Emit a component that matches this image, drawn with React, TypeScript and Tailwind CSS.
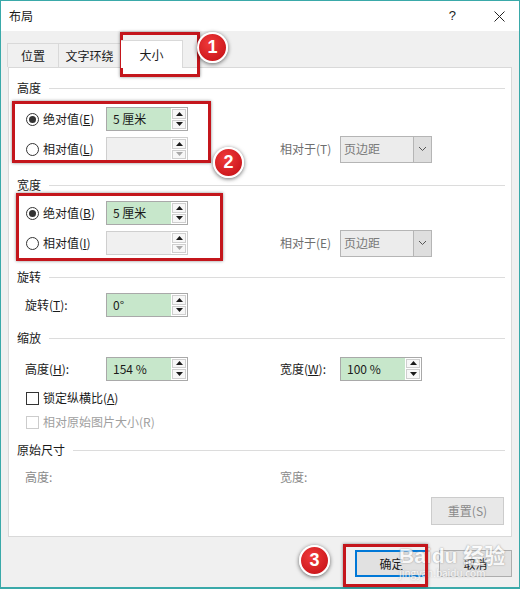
import React from "react";

const font = { fontFamily: '"Noto Sans CJK SC", "Microsoft YaHei", sans-serif' };

function Up({ dim }: { dim?: boolean }) {
  return (
    <svg width="7" height="4" viewBox="0 0 7 4">
      <polygon points="0,4 7,4 3.5,0" fill={dim ? "#a8a8a8" : "#1a1a1a"} />
    </svg>
  );
}

function Down({ dim }: { dim?: boolean }) {
  return (
    <svg width="7" height="4" viewBox="0 0 7 4">
      <polygon points="0,0 7,0 3.5,4" fill={dim ? "#a8a8a8" : "#1a1a1a"} />
    </svg>
  );
}

function Spin({ value, disabled }: { value?: string; disabled?: boolean }) {
  return (
    <div
      className={`flex h-[24px] w-[82px] border ${
        disabled ? "border-[#cfcfcf] bg-[#f0f0f0]" : "border-[#a9a9a9] bg-[#c7e7cb]"
      }`}
    >
      <div className="flex flex-1 items-center pl-[6px] text-[12px] text-[#1a1a1a]">{value}</div>
      <div className="flex w-[16px] flex-col gap-[1px] bg-white p-[1px]">
        <div className="flex flex-1 items-center justify-center border border-[#cfcfcf] bg-[#f7f7f7]">
          <Up />
        </div>
        <div className="flex flex-1 items-center justify-center border border-[#cfcfcf] bg-[#f7f7f7]">
          <Down dim={disabled} />
        </div>
      </div>
    </div>
  );
}

function Radio({ checked }: { checked?: boolean }) {
  return (
    <span className="flex h-[13px] w-[13px] items-center justify-center rounded-full border border-[#333] bg-white">
      {checked && <span className="h-[7px] w-[7px] rounded-full bg-[#333]" />}
    </span>
  );
}

function Header({ title, mt }: { title: string; mt: string }) {
  return (
    <div className={`flex h-[14px] items-center ${mt}`}>
      <span className="text-[12px] leading-[14px] text-[#1a1a1a]">{title}</span>
      <div className="ml-[8px] mr-[6px] h-px flex-1 bg-[#dcdcdc]" />
    </div>
  );
}

function Select({ text }: { text: string }) {
  return (
    <div className="flex h-[27px] w-[92px] border border-[#b5b5b5] bg-[#ececec]">
      <div className="flex flex-1 items-center pl-[3px] text-[12px] text-[#7a7a7a]">{text}</div>
      <div className="flex w-[18px] items-center justify-center border-l border-[#b5b5b5] bg-[#dedede]">
        <svg width="9" height="6" viewBox="0 0 9 6">
          <polyline points="1,1 4.5,4.5 8,1" fill="none" stroke="#555" strokeWidth="1" />
        </svg>
      </div>
    </div>
  );
}

function RadioRow({
  label,
  k,
  checked,
  value,
  mt,
  right,
}: {
  label: string;
  k: string;
  checked?: boolean;
  value?: string;
  mt: string;
  right?: string;
}) {
  return (
    <div className={`flex h-[24px] items-center pl-[9px] ${mt}`}>
      <div className="flex w-[80px] items-center gap-[4px]">
        <Radio checked={checked} />
        <span className="text-[12px] text-[#1a1a1a]">
          {label}(<span className="underline">{k}</span>)
        </span>
      </div>
      <Spin value={value} disabled={!checked} />
      {right && (
        <>
          <div className="w-[92px]" />
          <span className="w-[60px] text-[12px] text-[#6e6e6e]">{right}</span>
          <Select text="页边距" />
        </>
      )}
    </div>
  );
}

function Badge({ n, x, y }: { n: string; x: string; y: string }) {
  return (
    <div
      className={`absolute ${x} ${y} flex h-[31px] w-[31px] items-center justify-center rounded-full border-[2px] border-white bg-[radial-gradient(circle_at_40%_35%,#f03a3a,#c10d13)] text-[18px] font-bold text-white shadow-[0_1px_4px_rgba(0,0,0,0.6)]`}
      style={{ fontFamily: '"Liberation Sans", Arial, sans-serif' }}
    >
      {n}
    </div>
  );
}

export default function App() {
  return (
    <div
      className="relative flex h-[589px] w-[520px] flex-col border border-b-2 border-[#3aa9a9] bg-[#f0f0f0]"
      style={font}
    >
      {/* Title bar */}
      <div className="flex h-[30px] items-center bg-white pl-[8px] pr-[14px]">
        <span className="text-[12px] text-[#1a1a1a]">布局</span>
        <div className="flex-1" />
        <span className="mr-[38px] text-[13px] text-[#222]" style={{ fontFamily: '"Liberation Sans", sans-serif' }}>
          ?
        </span>
        <svg width="11" height="11" viewBox="0 0 11 11">
          <path d="M0.5 0.5 L10.5 10.5 M10.5 0.5 L0.5 10.5" stroke="#222" strokeWidth="1" />
        </svg>
      </div>

      {/* Tabs */}
      <div className="flex h-[36px] items-end pl-[6px]">
        <div className="flex h-[24px] w-[52px] items-center justify-center border border-b-0 border-[#d9d9d9] text-[12px] text-[#1a1a1a]">
          位置
        </div>
        <div className="flex h-[24px] w-[62px] items-center justify-center border border-b-0 border-l-0 border-[#d9d9d9] text-[12px] text-[#1a1a1a]">
          文字环绕
        </div>
        <div className="relative z-10 mb-[-1px] flex h-[28px] w-[62px] items-center justify-center border border-b-0 border-l-0 border-[#d9d9d9] bg-white text-[12px] text-[#1a1a1a]">
          大小
        </div>
      </div>

      {/* Panel */}
      <div className="mx-[7px] flex h-[470px] flex-col border border-[#d9d9d9] bg-white pl-[8px] pt-[13px]">
        <Header title="高度" mt="mt-0" />
        <RadioRow label="绝对值" k="E" checked value="5 厘米" mt="mt-[12px]" />
        <RadioRow label="相对值" k="L" mt="mt-[6px]" right="相对于(T)" />

        <Header title="宽度" mt="mt-[17px]" />
        <RadioRow label="绝对值" k="B" checked value="5 厘米" mt="mt-[9px]" />
        <RadioRow label="相对值" k="I" mt="mt-[6px]" right="相对于(E)" />

        <Header title="旋转" mt="mt-[15px]" />
        <div className="mt-[9px] flex h-[24px] items-center pl-[8px]">
          <span className="w-[81px] text-[12px] text-[#1a1a1a]">
            旋转(<span className="underline">T</span>):
          </span>
          <Spin value="0°" />
        </div>

        <Header title="缩放" mt="mt-[14px]" />
        <div className="mt-[11px] flex h-[25px] items-center pl-[8px]">
          <span className="w-[81px] text-[12px] text-[#1a1a1a]">
            高度(<span className="underline">H</span>):
          </span>
          <Spin value="154 %" />
          <div className="w-[92px]" />
          <span className="w-[60px] text-[12px] text-[#1a1a1a]">
            宽度(<span className="underline">W</span>):
          </span>
          <Spin value="100 %" />
        </div>
        <div className="mt-[10px] flex h-[14px] items-center gap-[4px] pl-[9px]">
          <span className="h-[13px] w-[13px] border border-[#333] bg-white" />
          <span className="text-[12px] text-[#1a1a1a]">
            锁定纵横比(<span className="underline">A</span>)
          </span>
        </div>
        <div className="mt-[10px] flex h-[14px] items-center gap-[4px] pl-[9px]">
          <span className="h-[13px] w-[13px] border border-[#cccccc] bg-white" />
          <span className="text-[12px] text-[#a0a0a0]">相对原始图片大小(R)</span>
        </div>

        <Header title="原始尺寸" mt="mt-[14px]" />
        <div className="mt-[13px] flex h-[14px] items-center pl-[8px] text-[12px] text-[#8a8a8a]">
          <span className="w-[255px]">高度:</span>
          <span>宽度:</span>
        </div>

        <div className="mt-[13px] flex justify-end pr-[7px]">
          <div className="flex h-[28px] w-[73px] items-center justify-center border border-[#cccccc] bg-[#e8e8e8] text-[12px] text-[#8a8a8a]">
            重置(S)
          </div>
        </div>
      </div>

      {/* Footer buttons */}
      <div className="mt-[13px] flex justify-end gap-[11px] pr-[7px]">
        <div className="flex h-[27px] w-[73px] items-center justify-center border-2 border-[#0078d7] bg-[#e1e1e1] text-[12px] text-[#1a1a1a]">
          确定
        </div>
        <div className="flex h-[27px] w-[73px] items-center justify-center border border-[#adadad] bg-[#e1e1e1] text-[12px] text-[#1a1a1a]">
          取消
        </div>
      </div>

      {/* Watermark */}
      <div className="pointer-events-none absolute left-[398px] top-[543px] flex flex-col items-start whitespace-nowrap text-white opacity-75">
        <span
          className="text-[21px] font-bold leading-[23px]"
          style={{ textShadow: "0 0 2px #9a9a9a, 0 0 1px #9a9a9a", fontFamily: '"Liberation Sans", "Noto Sans CJK SC", sans-serif' }}
        >
          Baidu 经验
        </span>
        <span className="text-[10px] leading-[11px]" style={{ textShadow: "0 0 2px #9a9a9a" }}>
          jingyan.baidu.com
        </span>
      </div>

      {/* Annotations */}
      <div className="absolute left-[119px] top-[31px] h-[45px] w-[80px] border-[3px] border-[#c4161c] shadow-[0_0_3px_rgba(0,0,0,0.45)]" />
      <div className="absolute left-[11px] top-[100px] h-[62px] w-[199px] border-[3px] border-[#c4161c] shadow-[0_0_3px_rgba(0,0,0,0.45)]" />
      <div className="absolute left-[15px] top-[192px] h-[68px] w-[207px] border-[3px] border-[#c4161c] shadow-[0_0_3px_rgba(0,0,0,0.45)]" />
      <div className="absolute left-[342px] top-[543px] h-[43px] w-[85px] border-[3px] border-[#c4161c] shadow-[0_0_3px_rgba(0,0,0,0.45)]" />

      <Badge n="1" x="left-[196px]" y="top-[31px]" />
      <Badge n="2" x="left-[212px]" y="top-[146px]" />
      <Badge n="3" x="left-[298px]" y="top-[544px]" />
    </div>
  );
}
